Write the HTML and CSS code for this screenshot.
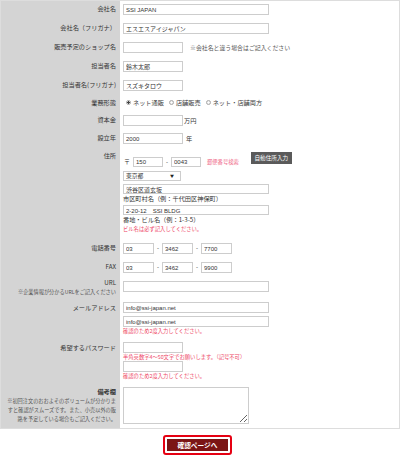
FILE: index.html
```html
<!DOCTYPE html>
<html lang="ja">
<head>
<meta charset="utf-8">
<title>お問い合わせフォーム</title>
<link rel="stylesheet" href="styles.css">
</head>
<body>
<form class="form">
  <div class="row h19">
    <div class="label">会社名</div>
    <div class="value"><input class="field w-wide" type="text" value="SSI JAPAN"></div>
  </div>
  <div class="row h19">
    <div class="label">会社名（フリガナ）</div>
    <div class="value"><input class="field w-wide" type="text" value="エスエスアイジャパン"></div>
  </div>
  <div class="row h19">
    <div class="label">販売予定のショップ名</div>
    <div class="value"><input class="field w-short" type="text"><span class="aside">※会社名と違う場合はご記入ください</span></div>
  </div>
  <div class="row h19">
    <div class="label">担当者名</div>
    <div class="value"><input class="field w-short" type="text" value="鈴木太郎"></div>
  </div>
  <div class="row h19">
    <div class="label">担当者名(フリガナ)</div>
    <div class="value"><input class="field w-short" type="text" value="スズキタロウ"></div>
  </div>
  <div class="row h16">
    <div class="label label-radio">業務形態</div>
    <div class="value value-radio">
      <label class="opt"><input class="radio" type="radio" name="type" checked>ネット通販</label>
      <label class="opt"><input class="radio" type="radio" name="type">店舗販売</label>
      <label class="opt"><input class="radio" type="radio" name="type">ネット・店舗両方</label>
    </div>
  </div>
  <div class="row h18">
    <div class="label">資本金</div>
    <div class="value"><input class="field w-short" type="text"><span class="unit">万円</span></div>
  </div>
  <div class="row h18">
    <div class="label">設立年</div>
    <div class="value"><input class="field w-short" type="text" value="2000"><span class="unit unit-year">年</span></div>
  </div>
  <div class="row h92">
    <div class="label">住所</div>
    <div class="value addr">
      <div class="postal">
        <span class="mark">〒</span>
        <input class="field w-zip" type="text" value="150">
        <span class="dash">-</span>
        <input class="field w-zip" type="text" value="0043">
        <span class="zip-link">郵便番号検索</span>
        <button class="auto-btn" type="button">自動住所入力</button>
      </div>
      <div class="select"><span>東京都</span><span class="arrow">▼</span></div>
      <input class="field w-wide f10 mt3" type="text" value="渋谷区道玄坂">
      <div class="hint hint1">市区町村名（例：千代田区神保町）</div>
      <input class="field w-wide f10 mt1" type="text" value="2-20-12　SSI BLDG">
      <div class="hint">番地・ビル名（例：1-3-5）</div>
      <div class="warn warn-addr">ビル名は必ず記入してください。</div>
    </div>
  </div>
  <div class="row h19">
    <div class="label">電話番号</div>
    <div class="value">
      <input class="field w-tel" type="text" value="03"><span class="dash">-</span><input class="field w-tel" type="text" value="3462"><span class="dash">-</span><input class="field w-tel" type="text" value="7700">
    </div>
  </div>
  <div class="row h19">
    <div class="label">FAX</div>
    <div class="value">
      <input class="field w-tel" type="text" value="03"><span class="dash">-</span><input class="field w-tel" type="text" value="3462"><span class="dash">-</span><input class="field w-tel" type="text" value="9900">
    </div>
  </div>
  <div class="row h21">
    <div class="label label-url"><div class="url-title">URL</div><div class="note">※企業情報が分かるURLをご記入ください</div></div>
    <div class="value pt4"><input class="field w-wide" type="text"></div>
  </div>
  <div class="row h40">
    <div class="label pt3">メールアドレス</div>
    <div class="value col pt4">
      <input class="field w-wide" type="text" value="info@ssi-japan.net">
      <input class="field w-wide mt3" type="text" value="info@ssi-japan.net">
      <div class="warn warn-mail">確認のため2度入力してください。</div>
    </div>
  </div>
  <div class="row h45">
    <div class="label pt3">希望するパスワード</div>
    <div class="value col pt4">
      <input class="field w-short" type="password">
      <div class="warn warn-pass">半角英数字4～50文字でお願いします。（記号不可）</div>
      <input class="field w-short" type="password">
      <div class="warn warn-pass">確認のため2度入力してください。</div>
    </div>
  </div>
  <div class="row h44">
    <div class="label label-notes">
      <div class="notes-title">備考欄</div>
      <div class="notes-text">※初回注文のおおよそのボリュームが分かりま<br>すと確認がスムーズです。また、小売以外の販<br>路を予定している場合もご記入ください。</div>
    </div>
    <div class="value pt4"><textarea class="memo"></textarea></div>
  </div>
</form>
<div class="actions">
  <button class="submit" type="button"><span class="submit-inner">確認ページへ</span></button>
</div>
</body>
</html>
```

FILE: styles.css
```css
* {
  box-sizing: border-box;
}

html,
body {
  margin: 0;
  padding: 0;
  background: #ffffff;
}

body {
  width: 400px;
  font-family: "Liberation Sans", "Noto Sans CJK JP", sans-serif;
  color: #333333;
  font-size: 6px;
}

.form {
  width: 400px;
  margin: 0;
  border: 1px solid #dddddd;
}

.row {
  display: grid;
  grid-template-columns: 119px 1fr;
}

.h16 { height: 16px; }
.h18 { height: 18px; }
.h19 { height: 19px; }
.h21 { height: 21px; }
.h40 { height: 40px; }
.h44 { height: 44px; }
.h45 { height: 45px; }
.h92 { height: 92px; }

.label {
  background: #d4d4d4;
  text-align: right;
  padding: 2px 4px 0 0;
  font-family: "Noto Sans CJK JP", sans-serif;
  font-size: 6.2px;
  line-height: 11px;
  color: #333333;
  white-space: nowrap;
}

.pt3 { padding-top: 3px; }
.pt4 { padding-top: 4px; }

.value {
  display: flex;
  align-items: flex-start;
  padding: 3px 0 0 3px;
}

.value.col {
  flex-direction: column;
}

.field {
  display: block;
  height: 11px;
  margin: 0;
  padding: 0 2px;
  border: 1px solid #cdcdcd;
  border-radius: 0;
  background: #ffffff;
  color: #333333;
  font-family: "Liberation Sans", "Noto Sans CJK JP", sans-serif;
  font-size: 6px;
  line-height: 9px;
  outline: none;
}

.w-wide { width: 146px; }
.w-short { width: 60px; }
.w-tel { width: 31px; }
.w-zip { width: 30px; }
.f10 { height: 10px; line-height: 8px; }
.mt1 { margin-top: 1px; }
.mt3 { margin-top: 3px; }

.aside {
  margin-left: 7px;
  font-family: "Noto Sans CJK JP", sans-serif;
  font-size: 5.9px;
  line-height: 11px;
  color: #555555;
  white-space: nowrap;
}

.unit {
  margin-left: 1px;
  font-family: "Noto Sans CJK JP", sans-serif;
  font-size: 6.2px;
  line-height: 11px;
}

.unit-year {
  margin-left: 3px;
}

/* radios */
.label-radio {
  line-height: 9px;
}

.value-radio {
  padding-top: 2px;
  padding-left: 6px;
  align-items: center;
  height: 11px;
}

.opt {
  display: flex;
  align-items: center;
  height: 9px;
  font-family: "Noto Sans CJK JP", sans-serif;
  font-size: 6.2px;
  color: #444444;
  margin-right: 5px;
  white-space: nowrap;
}

.radio {
  appearance: none;
  -webkit-appearance: none;
  width: 5px;
  height: 5px;
  margin: 0 2px 0 0;
  border: 1px solid #a8a8a8;
  border-radius: 50%;
  background: radial-gradient(circle, #ffffff 0, #e2e2e2 100%);
}

.radio:checked {
  background: radial-gradient(circle, #444444 0, #444444 1.1px, #ffffff 1.4px);
}

/* address */
.addr {
  flex-direction: column;
  padding-top: 4px;
}

.postal {
  display: flex;
  align-items: flex-end;
  height: 15px;
}

.postal .field {
  height: 10px;
  line-height: 8px;
}

.mark {
  font-family: "Noto Sans CJK JP", sans-serif;
  font-size: 6px;
  line-height: 10px;
  margin: 0 3px 0 1px;
}

.dash {
  display: block;
  font-size: 6px;
  line-height: 11px;
  margin: 0 3px;
}

.postal .dash {
  line-height: 10px;
}

.zip-link {
  margin-left: 6px;
  font-family: "Noto Sans CJK JP", sans-serif;
  font-size: 5.3px;
  line-height: 10px;
  color: #ef6a88;
  white-space: nowrap;
}

.auto-btn {
  margin: 0 0 3px 12px;
  width: 41px;
  height: 12px;
  padding: 0;
  border: none;
  border-radius: 0;
  background: #5a5a5a;
  color: #ffffff;
  font-family: "Noto Sans CJK JP", sans-serif;
  font-size: 5.6px;
  line-height: 12px;
  text-align: center;
  white-space: nowrap;
}

.select {
  display: flex;
  justify-content: space-between;
  align-items: center;
  width: 58px;
  height: 10px;
  margin-top: 4px;
  padding: 0 6px 0 2px;
  border: 1px solid #cdcdcd;
  background: #ffffff;
  font-family: "Noto Sans CJK JP", sans-serif;
  font-size: 5.8px;
  line-height: 8px;
}

.arrow {
  font-size: 4px;
  color: #222222;
}

.hint {
  font-family: "Noto Sans CJK JP", sans-serif;
  font-size: 6.2px;
  line-height: 9px;
  color: #333333;
  white-space: nowrap;
}

.hint1 {
  line-height: 10px;
}

.warn {
  font-family: "Noto Sans CJK JP", sans-serif;
  font-size: 5.3px;
  color: #ee4766;
  white-space: nowrap;
}

.warn-addr { line-height: 11px; }
.warn-mail { line-height: 8px; }
.warn-pass { line-height: 8px; }

/* url */
.label-url {
  padding-top: 0;
}

.url-title {
  line-height: 9px;
}

.note {
  font-size: 5.2px;
  line-height: 9px;
  color: #555555;
}

/* notes */
.label-notes {
  padding-top: 3px;
  padding-right: 4px;
}

.notes-title {
  line-height: 9px;
  font-weight: bold;
}

.notes-text {
  font-size: 5.2px;
  line-height: 9px;
  color: #555555;
}

.memo {
  display: block;
  width: 126px;
  height: 37px;
  margin: 0;
  padding: 2px;
  border: 1px solid #cdcdcd;
  background: #ffffff;
  font-size: 6px;
  resize: both;
}

/* submit */
.actions {
  display: flex;
  justify-content: center;
  padding: 6px 5px 0 0;
}

.submit {
  display: block;
  margin: 0;
  padding: 2px;
  border: 2px solid #e60012;
  border-radius: 3px;
  background: #ffffff;
  cursor: pointer;
}

.submit-inner {
  display: block;
  width: 61px;
  height: 12px;
  background: #7b1515;
  color: #ffffff;
  font-family: "Noto Sans CJK JP", sans-serif;
  font-weight: bold;
  font-size: 6.7px;
  line-height: 12px;
  text-align: center;
  white-space: nowrap;
}
```
